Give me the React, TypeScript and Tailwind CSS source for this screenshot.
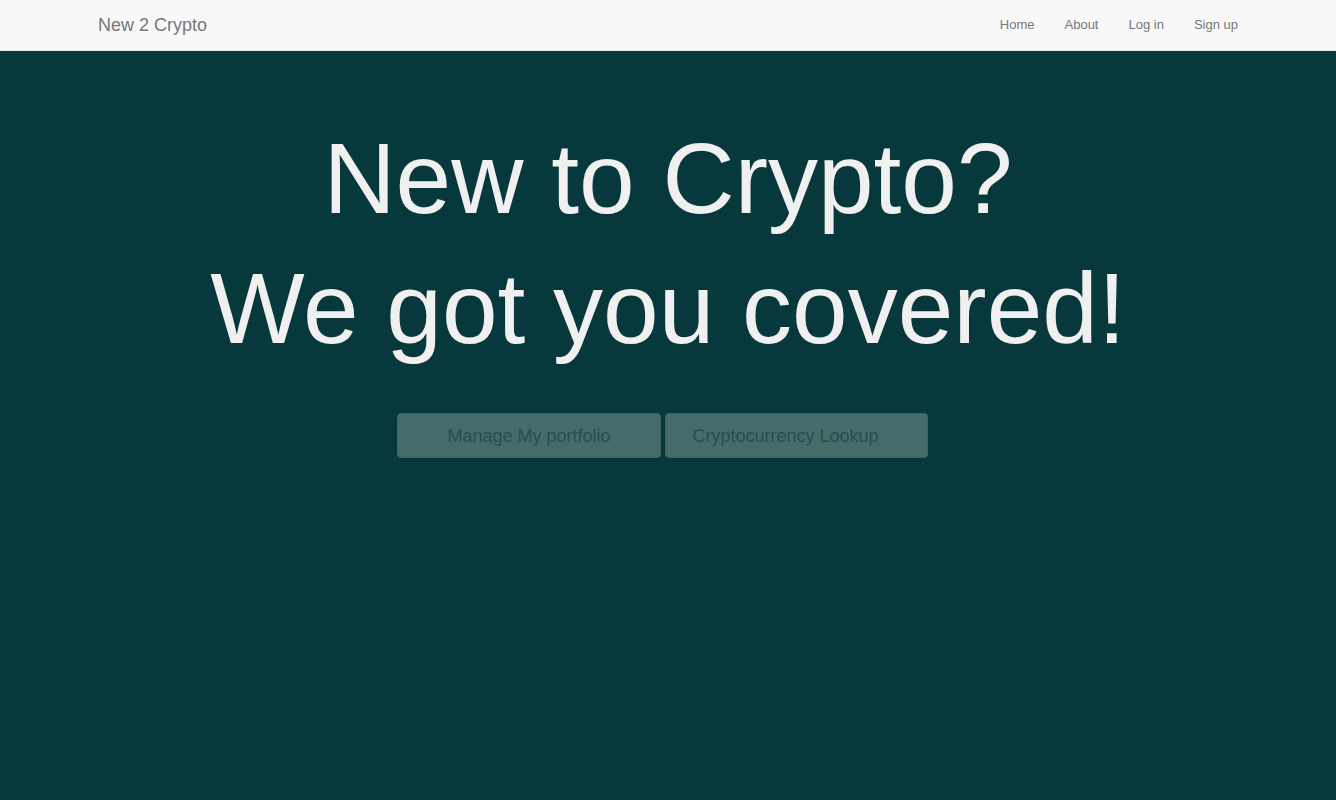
export default function App() {
  const links = ['Home', 'About', 'Log in', 'Sign up'];

  return (
    <div className="flex min-h-[800px] flex-col bg-[#07383c] font-['Liberation_Sans',Arial,sans-serif]">
      {/* Navbar */}
      <nav className="h-[51px] border-b border-[#e7e7e7] bg-[#f8f8f8]">
        <div className="mx-auto flex h-[50px] w-[1170px] items-center justify-between px-[15px]">
          <a className="text-[18px] leading-[20px] text-[#777]">New 2 Crypto</a>
          <ul className="-mr-[15px] flex">
            {links.map((l) => (
              <li key={l}>
                <a className="block px-[15px] py-[15px] text-[13px] leading-[20px] text-[#777]">{l}</a>
              </li>
            ))}
          </ul>
        </div>
      </nav>

      {/* Hero */}
      <main className="flex flex-col items-center pt-[62px]">
        <h1 className="text-center text-[100px] leading-[130px] text-[#f0f0f0]">New to Crypto?</h1>
        <h1 className="text-center text-[100px] leading-[130px] text-[#f0f0f0]">We got you covered!</h1>
        <div className="mt-[40px] flex gap-[4px] pr-[11px]">
          <button className="h-[45px] w-[264px] rounded-[4px] border border-[#3d6362] bg-[#466b6a] pt-[2px] text-[18px] text-[#2a4e50]">
            Manage My portfolio
          </button>
          <button className="h-[45px] w-[263px] rounded-[4px] border border-[#3d6362] bg-[#466b6a] pt-[2px] pr-[22px] text-[18px] text-[#2a4e50]">
            Cryptocurrency Lookup
          </button>
        </div>
      </main>
    </div>
  );
}
